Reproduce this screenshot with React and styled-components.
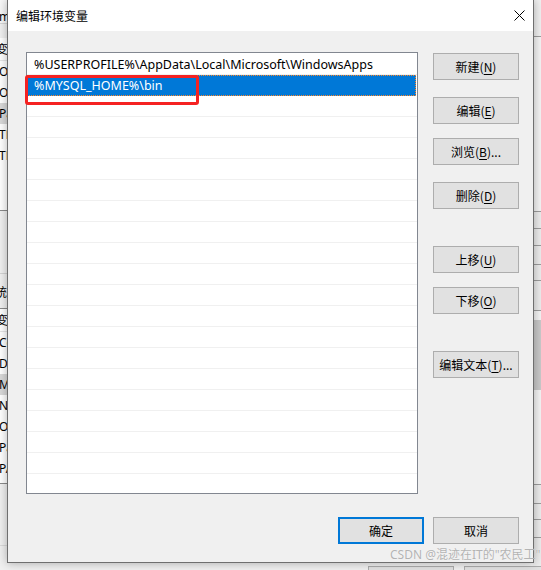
import React from "react";
import styled, { createGlobalStyle } from "styled-components";

const GlobalStyle = createGlobalStyle`
  html, body { margin: 0; padding: 0; background: #f0f0f0; overflow: hidden; }
  #root { width: 541px; height: 570px; }
`;

const UI = `"Noto Sans", "Noto Sans CJK SC", sans-serif`;
const CJK = `"Noto Sans CJK SC", "Noto Sans", sans-serif`;

const Desktop = styled.div`
  position: relative;
  width: 541px;
  height: 570px;
  overflow: hidden;
  background: #f0f0f0;
  font-family: ${UI};
  font-size: 12px;
  color: #000;
`;

/* ---------- background window (partly hidden) ---------- */
const BgWindow = styled.div`
  display: grid;
  grid-template-columns: 7px 1fr 8px;
  height: 100%;
`;
const BgMain = styled.div`
  display: flex;
  flex-direction: column;
  min-width: 0;
  overflow: hidden;
`;
const BgCaption = styled.div`
  height: 24px;
  box-sizing: border-box;
  padding-top: 9px;
  line-height: 16px;
  background: #f7f7f7;
  border-bottom: 1px solid #d6d6d6;
  margin-left: -1px;
  white-space: nowrap;
`;
const BgList = styled.div`
  margin-top: ${(p) => p.$mt}px;
  height: ${(p) => p.$h}px;
  box-sizing: border-box;
  background: #fff;
  border-bottom: 1px solid #8a8a8a;
  display: flex;
  flex-direction: column;
`;
const BgHeader = styled.div`
  height: 23px;
  box-sizing: border-box;
  line-height: 21px;
  border-bottom: 1px solid #e5e5e5;
  margin-left: -4px;
  font-family: ${CJK};
  white-space: nowrap;
`;
const BgRow = styled.div`
  height: 21px;
  line-height: 21px;
  margin-left: -1px;
  white-space: nowrap;
  background: ${(p) => (p.$sel ? "#d9d9d9" : "transparent")};
`;
const BgLabel = styled.div`
  margin-top: ${(p) => p.$mt}px;
  height: 26px;
  line-height: 20px;
  border-top: 1px solid #d3d3d3;
  padding-top: 8px;
  box-sizing: content-box;
  margin-left: -5px;
  font-family: ${CJK};
  white-space: nowrap;
  border-bottom: 1px solid #8a8a8a;
`;
const BgRule = styled.div`
  margin-top: ${(p) => p.$mt}px;
  border-top: 1px solid #dadada;
`;
const BgCenter = styled.div`
  background: #f0f0f0;
`;
const BgStrip = styled.div`
  display: flex;
  flex-direction: column;
  background: #ececec;
`;
const StripSeg = styled.div`
  height: ${(p) => p.$h}px;
  flex: none;
  background: ${(p) => p.$bg || "transparent"};
  border-bottom: ${(p) => (p.$line ? "1px solid #9c9c9c" : "none")};
`;
const BgButtonRow = styled.div`
  position: absolute;
  left: 368px;
  top: 566px;
  display: flex;
  gap: 10px;
`;
const BgButton = styled.div`
  width: 86px;
  height: 20px;
  box-sizing: border-box;
  border: 1px solid #adadad;
  background: #e1e1e1;
`;

/* ---------- dialog ---------- */
const Dialog = styled.div`
  position: absolute;
  left: 7px;
  top: 0;
  width: 527px;
  box-sizing: border-box;
  border: 1px solid #6f6f6f;
  border-top: none;
  background: #f0f0f0;
  box-shadow: 0 0 9px rgba(0, 0, 0, 0.3);
  display: flex;
  flex-direction: column;
`;
const TitleBar = styled.div`
  height: 31px;
  background: #fff;
  display: flex;
  align-items: center;
  justify-content: space-between;
  padding-left: 8px;
`;
const Title = styled.span`
  font-family: ${CJK};
  font-size: 12px;
  line-height: 16px;
`;
const CloseButton = styled.div`
  width: 28px;
  height: 31px;
  display: flex;
  align-items: center;
  justify-content: center;
`;
const Body = styled.div`
  display: grid;
  grid-template-columns: 392px 86px;
  column-gap: 15px;
  padding: 21px 13px 18px 18px;
`;
const ListBox = styled.div`
  height: 442px;
  box-sizing: border-box;
  border: 1px solid #828790;
  background: #fff;
  padding-top: 1px;
  overflow: hidden;
`;
const ListRow = styled.div`
  height: 21px;
  box-sizing: border-box;
  padding-left: 7px;
  line-height: 21px;
  font-size: 12.5px;
  white-space: nowrap;
  border-bottom: 1px solid ${(p) => (p.$sel ? "#0078d7" : "#f0f0f0")};
  background: ${(p) => (p.$sel ? "#0078d7" : "#fff")};
  color: ${(p) => (p.$sel ? "#fff" : "#000")};
  outline: ${(p) => (p.$sel ? "1px dotted #ff8728" : "none")};
  outline-offset: -1px;
  margin-right: ${(p) => (p.$sel ? "1px" : "0")};
`;
const ButtonColumn = styled.div`
  display: flex;
  flex-direction: column;
`;
const Button = styled.div`
  width: 86px;
  height: 27px;
  box-sizing: border-box;
  margin-top: ${(p) => p.$mt || 0}px;
  border: ${(p) => (p.$default ? "2px solid #0078d7" : "1px solid #adadad")};
  background: #e1e1e1;
  display: flex;
  align-items: center;
  justify-content: center;
  font-family: ${CJK};
  font-size: 12px;
  white-space: nowrap;
  u { text-underline-offset: 2px; }
`;
const Footer = styled.div`
  grid-column: 1 / -1;
  margin-top: 23px;
  display: flex;
  justify-content: flex-end;
  gap: 9px;
`;

/* ---------- overlays ---------- */
const Annotation = styled.div`
  position: absolute;
  left: 25px;
  top: 75px;
  width: 174px;
  height: 30px;
  box-sizing: border-box;
  border: 3px solid #f52222;
  border-radius: 3px;
  pointer-events: none;
`;
const Watermark = styled.div`
  position: absolute;
  left: 390px;
  top: 546px;
  font-family: ${UI};
  font-size: 12px;
  line-height: 18px;
  color: #b3b3b3;
  white-space: nowrap;
  text-shadow: 0 0 1px #fff;
`;

const paths = [
  "%USERPROFILE%\\AppData\\Local\\Microsoft\\WindowsApps",
  "%MYSQL_HOME%\\bin",
];

const sideButtons = [
  { label: "新建", key: "N", mt: 1 },
  { label: "编辑", key: "E", mt: 17 },
  { label: "浏览", key: "B", tail: "...", mt: 14 },
  { label: "删除", key: "D", mt: 17 },
  { label: "上移", key: "U", mt: 37 },
  { label: "下移", key: "O", mt: 14 },
  { label: "编辑文本", key: "T", tail: "...", mt: 37 },
];

const stripSegs = [
  { h: 36, bg: "#f0f0f0", line: true },
  { h: 174, bg: "#f4f4f4", line: true },
  { h: 16, line: true },
  { h: 16, line: true },
  { h: 18, line: true },
  { h: 15, line: true },
  { h: 29, line: true },
  { h: 9, bg: "#f4f4f4" },
  { h: 70, bg: "#c9c9c9" },
  { h: 94, bg: "#f4f4f4", line: true },
  { h: 18, line: true },
  { h: 15, line: true },
  { h: 17, line: true },
  { h: 40 },
];

export default function App() {
  return (
    <>
      <GlobalStyle />
      <Desktop>
        <BgWindow>
          <BgMain>
            <BgCaption>m</BgCaption>
            <BgList $mt={14} $h={173}>
              <BgHeader>变</BgHeader>
              <BgRow>On</BgRow>
              <BgRow>On</BgRow>
              <BgRow $sel>Pa</BgRow>
              <BgRow>TE</BgRow>
              <BgRow>TM</BgRow>
            </BgList>
            <BgLabel $mt={62}>统</BgLabel>
            <BgList $mt={0} $h={175}>
              <BgHeader>变</BgHeader>
              <BgRow>Co</BgRow>
              <BgRow>Dr</BgRow>
              <BgRow $sel>MY</BgRow>
              <BgRow>NU</BgRow>
              <BgRow>OS</BgRow>
              <BgRow>Pa</BgRow>
              <BgRow>PA</BgRow>
            </BgList>
            <BgRule $mt={61} />
          </BgMain>
          <BgCenter />
          <BgStrip>
            {stripSegs.map((s, i) => (
              <StripSeg key={i} $h={s.h} $bg={s.bg} $line={s.line} />
            ))}
          </BgStrip>
        </BgWindow>
        <BgButtonRow>
          <BgButton />
          <BgButton />
        </BgButtonRow>

        <Dialog>
          <TitleBar>
            <Title>编辑环境变量</Title>
            <CloseButton>
              <svg width="11" height="11" viewBox="0 0 11 11">
                <path d="M0.5 0.5 L10.5 10.5 M10.5 0.5 L0.5 10.5" stroke="#000" strokeWidth="1" fill="none" />
              </svg>
            </CloseButton>
          </TitleBar>
          <Body>
            <ListBox>
              {paths.map((p, i) => (
                <ListRow key={i} $sel={i === 1}>
                  {p}
                </ListRow>
              ))}
              {Array.from({ length: 19 }).map((_, i) => (
                <ListRow key={"e" + i} />
              ))}
            </ListBox>
            <ButtonColumn>
              {sideButtons.map((b) => (
                <Button key={b.label} $mt={b.mt}>
                  {b.label}(<u>{b.key}</u>){b.tail || ""}
                </Button>
              ))}
            </ButtonColumn>
            <Footer>
              <Button $default>确定</Button>
              <Button>取消</Button>
            </Footer>
          </Body>
        </Dialog>

        <Annotation />
        <Watermark>CSDN @混迹在IT的"农民工"</Watermark>
      </Desktop>
    </>
  );
}
